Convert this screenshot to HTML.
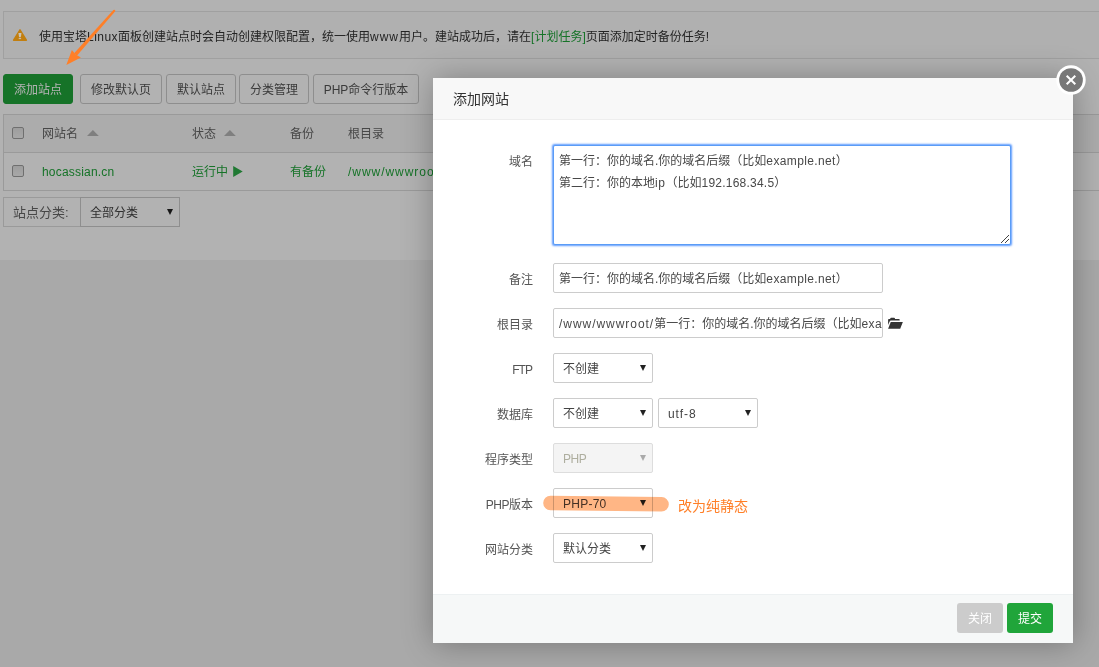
<!DOCTYPE html>
<html lang="zh-CN">
<head>
<meta charset="utf-8">
<title>添加网站</title>
<style>
*{box-sizing:border-box;}
html,body{margin:0;padding:0;}
body{width:1099px;height:667px;overflow:hidden;background:#f2f2f2;position:relative;
  font-family:"Liberation Sans","Noto Sans CJK SC",sans-serif;font-size:12px;color:#333;}
.abs{position:absolute;}
#page{position:absolute;left:0;top:0;width:1099px;height:667px;overflow:hidden;}
#panel{position:absolute;left:0;top:0;width:1200px;height:260px;background:#fff;}
#tips{position:absolute;left:3px;top:11px;width:1200px;height:48px;border:1px solid #e6e6e6;background:#fcfcfc;line-height:46px;white-space:nowrap;}
#tips .txt{position:absolute;left:35px;top:2px;}
#tips a{color:#20a53a;text-decoration:none;}
.btn{position:absolute;top:74px;height:30px;line-height:30px;border:1px solid #ccc;border-radius:3px;background:#fff;color:#555;text-align:center;font-size:12px;white-space:nowrap;}
.btn.green{background:#20a53a;border-color:#20a53a;color:#fff;}
#tbl{position:absolute;left:3px;top:114px;width:1200px;height:77px;border:1px solid #ddd;}
#tbl .hd{position:absolute;left:0;top:0;width:100%;height:38px;background:#f6f6f6;border-bottom:1px solid #ddd;}
#tbl .cell{position:absolute;line-height:20px;white-space:nowrap;color:#666;}
#tbl .g{color:#20a53a;}
.cb{position:absolute;width:12px;height:12px;border:1px solid #a0a0a0;border-radius:2px;background:linear-gradient(#e2e2e2,#f0f0f0);}
.tri-up{position:absolute;width:0;height:0;border-left:6px solid transparent;border-right:6px solid transparent;border-bottom:7px solid #c4c4c4;}
#cat{position:absolute;left:3px;top:197px;width:77px;height:30px;border:1px solid #ddd;border-right:0;line-height:30px;padding-left:9px;color:#666;background:#fff;white-space:nowrap;font-size:13px;}
.sel{position:absolute;height:30px;border:1px solid #ccc;border-radius:2px;background:#fff;line-height:30px;padding-left:9px;color:#444;white-space:nowrap;}
.sel:after{content:"";position:absolute;right:6px;top:11px;border-left:3.5px solid transparent;border-right:3.5px solid transparent;border-top:6px solid #222;}
.sel.dis{background:#f4f4f4;color:#aeae9f;border-color:#ddd;}
.sel.dis:after{border-top-color:#aaa;}
#shade{position:absolute;left:0;top:0;width:1099px;height:667px;background:rgba(0,0,0,.3);}
#modal{position:absolute;left:433px;top:78px;width:640px;height:565px;background:#fff;border-radius:0;box-shadow:1px 1px 30px rgba(0,0,0,.3);}
#modal .title{position:absolute;left:0;top:0;width:640px;height:42px;line-height:42px;padding-left:20px;font-size:14px;color:#333;background:#f8f8f8;border-bottom:1px solid #eee;}
#close{position:absolute;left:1056px;top:65px;width:30px;height:30px;border-radius:50%;background:#787878;border:3px solid #fff;}
.lab{position:absolute;left:453px;width:80px;height:30px;line-height:30px;margin-top:2px;text-align:right;color:#555;white-space:nowrap;}
.inp{position:absolute;left:553px;width:330px;height:30px;line-height:30px;border:1px solid #ccc;border-radius:2px;padding-left:5px;color:#484848;white-space:nowrap;overflow:hidden;background:#fff;}
#ta{position:absolute;left:553px;top:145px;width:458px;height:100px;border:1px solid #5a9cf6;border-radius:2px;box-shadow:0 0 2px .5px rgba(77,144,254,.9);padding:4px 5px;line-height:22px;color:#484848;white-space:nowrap;background:#fff;}
#foot{position:absolute;left:433px;top:594px;width:640px;height:49px;background:#f6f8f8;border-top:1px solid #edf1f2;}
.fbtn{position:absolute;top:603px;width:46px;height:30px;line-height:32px;text-align:center;border-radius:3px;color:#fff;font-size:12px;}
#note{position:absolute;left:678px;top:495px;font-size:14px;line-height:22px;color:#ff7f27;white-space:nowrap;}
svg{position:absolute;left:0;top:0;overflow:visible;}
.l1{letter-spacing:.37px;}
.l2{letter-spacing:.96px;}
</style>
</head>
<body>
<div id="page">
  <div id="panel"></div>
  <div id="tips">
    
    <span class="txt">使用宝塔<span style="letter-spacing:.46px">Linux</span>面板创建站点时会自动创建权限配置，统一使用<span style="letter-spacing:1px">www</span>用户。建站成功后，请在<a>[计划任务]</a>页面添加定时备份任务!</span>
  </div>
  <div class="btn green" style="left:3px;width:70px;">添加站点</div>
  <div class="btn" style="left:80px;width:82px;">修改默认页</div>
  <div class="btn" style="left:166px;width:70px;">默认站点</div>
  <div class="btn" style="left:239px;width:70px;">分类管理</div>
  <div class="btn" style="left:313px;width:106px;">PHP命令行版本</div>
  <div id="tbl">
    <div class="hd"></div>
    <div class="cb" style="left:8px;top:12px;"></div>
    <div class="cell" style="left:38px;top:9px;">网站名</div>
    <svg width="12" height="7" style="left:82.6px;top:15.2px;"><path d="M0 6 L5.9 0 L11.8 6 Z" fill="#b6b6b6"/></svg>
    <div class="cell" style="left:188px;top:9px;">状态</div>
    <svg width="12" height="7" style="left:220.2px;top:15.2px;"><path d="M0 6 L5.9 0 L11.8 6 Z" fill="#b6b6b6"/></svg>
    <div class="cell" style="left:286px;top:9px;">备份</div>
    <div class="cell" style="left:344px;top:9px;">根目录</div>
    <div class="cb" style="left:8px;top:50px;"></div>
    <div class="cell g" style="left:38px;top:47px;letter-spacing:.2px">hocassian.cn</div>
    <div class="cell g" style="left:188px;top:47px;">运行中</div>
    <svg width="10" height="12" style="left:229px;top:51px;"><path d="M0.2 -0.1 L9.7 5.5 L0.2 11.1 Z" fill="#2fae49"/></svg>
    <div class="cell g" style="left:286px;top:47px;">有备份</div>
    <div class="cell g" style="left:344px;top:47px;"><span class="l2">/www/wwwroot/</span>hocassian.cn</div>
  </div>
  <div id="cat">站点分类:</div>
  <div class="sel" style="left:80px;top:197px;width:100px;border-radius:0;">全部分类</div>
</div>
<div id="shade"></div>
<div id="modal"><div class="title">添加网站</div></div>
<div id="foot"></div>
<svg width="32" height="32" viewBox="-16 -16 32 32" style="left:1055.2px;top:63.9px;"><circle cx="0" cy="0" r="14.7" fill="#fff"/><circle cx="0" cy="0" r="11.85" fill="#787878"/><path d="M-4.3 -4.3 L4.3 4.3 M4.3 -4.3 L-4.3 4.3" stroke="#fff" stroke-width="2" fill="none"/></svg>

<div class="lab" style="top:145px;">域名</div>
<div id="ta">第一行：你的域名.你的域名后缀（比如<span class="l1">example.net</span>）<br>第二行：你的本地<span style="letter-spacing:.6px">ip</span>（比如<span style="letter-spacing:.22px">192.168.34.5</span>）
  <svg width="12" height="12" viewBox="0 0 12 12" style="left:444.2px;top:86.2px;"><path d="M11 3 L3 11 M11 7 L7 11" stroke="#444" stroke-width="1" fill="none"/></svg>
</div>
<div class="lab" style="top:263px;">备注</div>
<div class="inp" style="top:263px;">第一行：你的域名.你的域名后缀（比如<span class="l1">example.net</span>）</div>
<div class="lab" style="top:308px;">根目录</div>
<div class="inp" style="top:308px;"><span class="l2">/www/wwwroot/</span>第一行：你的域名.你的域名后缀（比如<span class="l1">example.net</span>）</div>
<svg width="16" height="12" viewBox="0 0 16 12" style="left:888px;top:318px;"><path d="M0.1 1.7 Q0.1 0.9 0.9 0.9 L2.1 0.9 L2.5 0.1 Q2.7 -0.15 3.1 -0.15 L6.1 -0.15 Q6.5 -0.15 6.7 0.1 L7.1 0.9 L10.9 0.9 Q11.7 0.9 11.7 1.7 L11.7 2.6 L2.9 2.6 Q2 2.6 1.65 3.4 L0.1 7 Z" fill="#333"/><path d="M0.1 10.65 L2.75 4.05 L14.85 4.05 L12.2 10.65 Z" fill="#333"/></svg>
<div class="lab" style="top:353px;"><span style="letter-spacing:-.9px;margin-right:.9px">FTP</span></div>
<div class="sel" style="left:553px;top:353px;width:100px;">不创建</div>
<div class="lab" style="top:398px;">数据库</div>
<div class="sel" style="left:553px;top:398px;width:100px;">不创建</div>
<div class="sel" style="left:658px;top:398px;width:100px;"><span style="letter-spacing:.9px">utf-8</span></div>
<div class="lab" style="top:443px;">程序类型</div>
<div class="sel dis" style="left:553px;top:443px;width:100px;"><span style="letter-spacing:-.4px">PHP</span></div>
<div class="lab" style="top:488px;"><span style="letter-spacing:-.5px">PHP</span>版本</div>
<div class="sel" style="left:553px;top:488px;width:100px;"><span style="letter-spacing:.25px">PHP-70</span></div>
<div id="note">改为纯静态</div>
<div class="lab" style="top:533px;">网站分类</div>
<div class="sel" style="left:553px;top:533px;width:100px;">默认分类</div>
<div class="fbtn" style="left:957px;background:#ccc;">关闭</div>
<div class="fbtn" style="left:1007px;background:#20a53a;">提交</div>

<svg width="14" height="12" viewBox="0 0 14 12" style="left:13px;top:29px"><path d="M7 0.8 L13.4 11.2 L0.6 11.2 Z" fill="#c27f10" stroke="#c27f10" stroke-width="1.4" stroke-linejoin="round"/><path d="M5.4 4.1 L8.5 4.1 L7.8 8.2 L6.1 8.2 Z" fill="#cbc4b8"/><rect x="5.7" y="9.1" width="2.4" height="1" fill="#cbc4b8"/></svg>
<svg width="1099" height="667" viewBox="0 0 1099 667" style="pointer-events:none;">
  <path d="M550.5 503 L661.5 504.3" stroke="#ffb685" stroke-width="14.6" stroke-linecap="round" fill="none" style="mix-blend-mode:multiply"/>
  <path d="M115.02 11.53 L76.85 55.69 L74.15 53.31 L113.38 10.07 Z" fill="#ff7f27"/><circle cx="114.2" cy="10.8" r="1.1" fill="#ff7f27"/>
  <path d="M66.3 65 L71.9 50.1 L75.6 54.6 L80.9 57.4 Z" fill="#ff7f27"/>
</svg>
</body>
</html>
